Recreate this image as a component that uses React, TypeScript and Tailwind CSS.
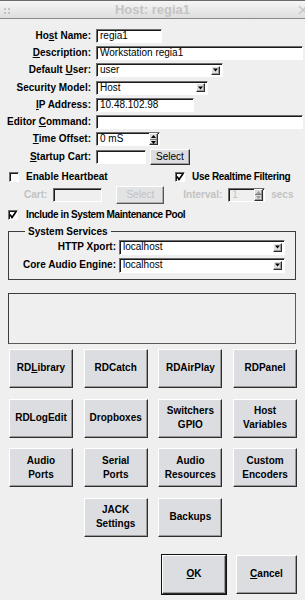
import React from "react";

const face =
  "bg-[#dcdde0] border border-t-white border-l-white border-r-[#2e2e2e] border-b-[#2e2e2e] shadow-[inset_-1px_-1px_0_#9a9a9a]";
const sunken =
  "border border-t-[#6e6e6e] border-l-[#6e6e6e] border-r-white border-b-white shadow-[inset_1px_1px_0_#1a1a1a]";

function U({ children }: { children: React.ReactNode }) {
  return <span className="underline underline-offset-[1px]">{children}</span>;
}

function DropArrow() {
  return (
    <div className={`w-[9px] h-[9px] flex items-center justify-center ${face}`}>
      <svg width="5" height="4" viewBox="0 0 5 4">
        <path d="M0 0.5h5L2.5 3.5z" fill="#000" />
      </svg>
    </div>
  );
}

function SpinArrows({ disabled }: { disabled?: boolean }) {
  const c = disabled ? "#9a9a9a" : "#000";
  return (
    <div className={`w-[9px] h-full flex flex-col ${face}`}>
      <div className="flex-1 flex items-center justify-center border-b border-[#777]">
        <svg width="5" height="3" viewBox="0 0 5 3">
          <path d="M0 3h5L2.5 0z" fill={c} />
        </svg>
      </div>
      <div className="flex-1 flex items-center justify-center">
        <svg width="5" height="3" viewBox="0 0 5 3">
          <path d="M0 0h5L2.5 3z" fill={c} />
        </svg>
      </div>
    </div>
  );
}

function Input({ w, value, h = "h-[14px]" }: { w: string; value?: string; h?: string }) {
  return (
    <div className={`${w} ${h} bg-white ${sunken} flex items-center pl-[3px] text-[10px] leading-none`}>
      {value}
    </div>
  );
}

function Combo({ w, value, h = "h-[14px]" }: { w: string; value: string; h?: string }) {
  return (
    <div className={`${w} ${h} bg-white ${sunken} flex items-center pl-[3px] pr-[2px] text-[10px] leading-none`}>
      <span className="flex-1">{value}</span>
      <DropArrow />
    </div>
  );
}

function Check({ checked }: { checked?: boolean }) {
  return (
    <div className={`w-[10px] h-[10px] bg-white ${sunken} flex items-center justify-center`}>
      {checked && (
        <svg width="8" height="8" viewBox="0 0 8 8">
          <path d="M1 3.5 L3 6.5 L7 0.8" stroke="#000" strokeWidth="1.6" fill="none" />
        </svg>
      )}
    </div>
  );
}

function FormRow({ label, children }: { label: React.ReactNode; children: React.ReactNode }) {
  return (
    <div className="flex items-center h-[17.3px]">
      <div className="w-[91px] text-right text-[10px] font-bold leading-none whitespace-nowrap">{label}</div>
      <div className="ml-[5px] flex items-center">{children}</div>
    </div>
  );
}

function Btn({ children, className = "" }: { children: React.ReactNode; className?: string }) {
  return (
    <div
      className={`h-[39px] w-[64px] ${face} flex items-center justify-center text-center text-[10px] font-bold leading-[14px] ${className}`}
    >
      <span>{children}</span>
    </div>
  );
}

export default function App() {
  return (
    <div className="w-[305px] h-[600px] overflow-hidden bg-[#efefef] text-black font-['Liberation_Sans',Arial,sans-serif]">
      {/* title bar */}
      <div className="relative h-[19px] border-t border-[#6a6a6a] border-b border-b-[#8a8a8a] bg-gradient-to-b from-[#f6f6f6] to-[#dedede] flex items-center justify-center">
        <div className="absolute left-[4px] top-[7px] grid grid-cols-2 gap-[2px]">
          <div className="w-[2px] h-[2px] bg-[#c4c4c4]" />
          <div className="w-[2px] h-[2px] bg-[#c4c4c4]" />
          <div className="w-[2px] h-[2px] bg-[#c4c4c4]" />
          <div className="w-[2px] h-[2px] bg-[#c4c4c4]" />
        </div>
        <span className="text-[13px] font-bold text-[#c4c4c4] leading-none">Host: regia1</span>
        <svg className="absolute left-[298px] top-[4px]" width="10" height="10" viewBox="0 0 10 10">
          <path d="M1 1L9 9M9 1L1 9" stroke="#c4c4c4" strokeWidth="1.3" />
        </svg>
      </div>

      {/* form */}
      <div className="pt-[8px]">
        <FormRow label={<>Ho<U>s</U>t Name:</>}>
          <Input w="w-[66px]" value="regia1" />
        </FormRow>
        <FormRow label={<><U>D</U>escription:</>}>
          <Input w="w-[207px]" value="Workstation regia1" />
        </FormRow>
        <FormRow label={<>Default <U>U</U>ser:</>}>
          <Combo w="w-[127px]" value="user" />
        </FormRow>
        <FormRow label="Security Model:">
          <Combo w="w-[112px]" value="Host" />
        </FormRow>
        <FormRow label={<><U>I</U>P Address:</>}>
          <Input w="w-[98px]" value="10.48.102.98" />
        </FormRow>
        <FormRow label={<>Editor <U>C</U>ommand:</>}>
          <Input w="w-[207px]" />
        </FormRow>
        <FormRow label={<><U>T</U>ime Offset:</>}>
          <div className={`flex h-[14px] w-[64px] bg-white ${sunken} pr-[1px]`}>
            <div className="flex-1 flex items-center pl-[3px] text-[10px] leading-none">0 mS</div>
            <SpinArrows />
          </div>
        </FormRow>
        <FormRow label={<><U>S</U>tartup Cart:</>}>
          <Input w="w-[50px]" />
          <div className={`ml-[4px] w-[40px] h-[16px] ${face} flex items-center justify-center text-[10px] leading-none`}>
            Select
          </div>
        </FormRow>

        {/* heartbeat */}
        <div className="mt-[4px] h-[16px] flex items-center text-[10px] font-bold leading-none">
          <div className="w-[166px] ml-[9px] flex items-center">
            <Check />
            <span className="ml-[7px]">Enable Heartbeat</span>
          </div>
          <Check checked />
          <span className="ml-[7px] tracking-[-0.3px] whitespace-nowrap">Use Realtime Filtering</span>
        </div>
        <div className="h-[19px] flex items-center pl-[24px] text-[10px] font-bold leading-none text-[#c2c2c2]">
          <span>Cart:</span>
          <div className={`ml-[6px] w-[49px] h-[14px] ${sunken}`} />
          <div className={`ml-[14px] w-[48px] h-[18px] bg-[#e2e3e5] border border-t-white border-l-white border-r-[#555] border-b-[#555] shadow-[inset_-1px_-1px_0_#b0b0b0] flex items-center justify-center font-normal`}>
            Select
          </div>
          <span className="ml-[19px]">Interval:</span>
          <div className={`ml-[6px] w-[37px] h-[14px] flex ${sunken} pr-[1px]`}>
            <div className="flex-1 flex items-center pl-[3px] font-normal">1</div>
            <SpinArrows disabled />
          </div>
          <span className="ml-[6px]">secs</span>
        </div>
        <div className="mt-[2px] h-[18px] flex items-center pl-[8px] text-[10px] font-bold leading-none">
          <Check checked />
          <span className="ml-[8px] tracking-[-0.4px] whitespace-nowrap">Include in System Maintenance Pool</span>
        </div>

        {/* system services */}
        <fieldset className="mt-[1.5px] ml-[8px] w-[288px] border border-[#3c3c3c] pt-[2px] pb-[6px] flex flex-col gap-[3px]">
          <legend className="ml-[16px] px-[3px] text-[10px] font-bold leading-[12px]">System Services</legend>
          <div className="flex items-center h-[15px]">
            <div className="w-[107px] text-right text-[10px] font-bold leading-none">HTTP Xport:</div>
            <div className="ml-[3px]">
              <Combo w="w-[166px]" h="h-[15px]" value="localhost" />
            </div>
          </div>
          <div className="flex items-center h-[15px]">
            <div className="w-[107px] text-right text-[10px] font-bold leading-none whitespace-nowrap">Core Audio Engine:</div>
            <div className="ml-[3px]">
              <Combo w="w-[166px]" h="h-[15px]" value="localhost" />
            </div>
          </div>
        </fieldset>

        {/* empty panel */}
        <div className="mt-[13px] ml-[8px] w-[288px] h-[51px] border border-t-[#3c3c3c] border-l-[#3c3c3c] border-r-[#5a5a5a] border-b-[#5a5a5a]" />

        {/* buttons */}
        <div className="mt-[5px] ml-[9px] grid grid-cols-[64px_64px_64px_64px] gap-x-[10.7px] gap-y-[10.7px]">
          <Btn>RD<U>L</U>ibrary</Btn>
          <Btn>RDCatch</Btn>
          <Btn>RDAirPlay</Btn>
          <Btn>RDPanel</Btn>
          <Btn>RDLogEdit</Btn>
          <Btn>Dropboxes</Btn>
          <Btn>Switchers<br />GPIO</Btn>
          <Btn>Host<br />Variables</Btn>
          <Btn>Audio<br />Ports</Btn>
          <Btn>Serial<br />Ports</Btn>
          <Btn>Audio<br />Resources</Btn>
          <Btn>Custom<br />Encoders</Btn>
          <Btn className="col-start-2">JACK<br />Settings</Btn>
          <Btn>Backups</Btn>
        </div>

        {/* ok / cancel */}
        <div className="mt-[17px] flex items-center justify-end pr-[8px] gap-[9px]">
          <div className="w-[66px] h-[41px] border border-[#111] flex">
            <div className={`flex-1 ${face} flex items-center justify-center text-[10px] font-bold leading-none`}>
              <U>O</U>K
            </div>
          </div>
          <div className={`w-[61px] h-[39px] ${face} flex items-center justify-center text-[10px] font-bold leading-none`}>
            <U>C</U>ancel
          </div>
        </div>
      </div>
    </div>
  );
}
